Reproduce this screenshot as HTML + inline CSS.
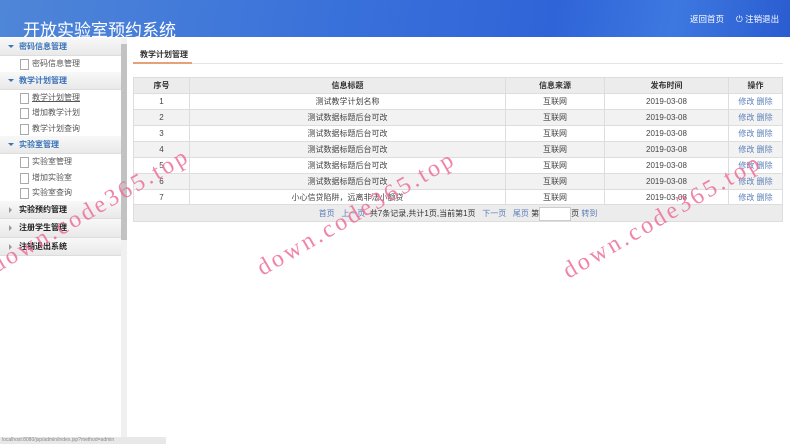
<!DOCTYPE html>
<html><head><meta charset="utf-8"><style>
*{margin:0;padding:0;box-sizing:border-box}
body{width:790px;height:444px;overflow:hidden;background:#fff;font-family:"Liberation Sans","Noto Sans CJK SC",sans-serif;font-size:8px;color:#333;position:relative}
.hd{position:absolute;left:0;top:0;width:790px;height:37px;background:linear-gradient(100deg,#4f86d8 0%,#3a72da 40%,#2f64d8 70%,#3d78e0 85%,#2a5cd0 100%)}
.hd .t{position:absolute;left:23px;top:16px;font-size:17px;color:#fff}
.hd .r{position:absolute;top:13px;color:#fff;font-size:8.5px}
.sb{position:absolute;left:0;top:38px;width:121px;height:400px;background:#fff}
.gh{height:18px;line-height:17px;background:linear-gradient(#f8f8f8,#e9e9e9);border-bottom:1px solid #ddd;color:#3b73b9;font-size:8px;padding-left:19px;position:relative;font-weight:bold}
.gh:before{content:"";position:absolute;left:8px;top:7px;border:3px solid transparent;border-top:3px solid #3b73b9}
.gh.c{color:#222;height:18.5px;line-height:18.5px}
.gh.c:before{border:3px solid transparent;border-left:3px solid #999;left:9px;top:6px}
.it{height:15.5px;line-height:15.5px;padding-left:32px;color:#555;font-size:8px;position:relative}
.it:before{content:"";position:absolute;left:20px;top:3px;width:7px;height:9px;border:1px solid #aaa;background:#fff}
.sc{position:absolute;left:121px;top:38px;width:6px;height:400px;background:#f0f0f0}
.sc i{position:absolute;left:0;top:6px;width:6px;height:196px;background:#c2c2c2}
.tab{position:absolute;left:140px;top:49px;font-size:8px;font-weight:bold;color:#333}
.tl{position:absolute;left:133px;top:63px;width:650px;height:1px;background:#e4e4e4}
.to{position:absolute;left:133px;top:62px;width:59px;height:2px;background:#e8a07a}
table{position:absolute;left:133px;top:77px;width:650px;border-collapse:collapse;font-size:8px}
td,th{border:1px solid #ddd;height:16px;text-align:center;color:#444;font-weight:normal}
th{background:#ececec;font-weight:bold;color:#333}
tr:nth-child(odd) td{background:#f2f2f2}
a{color:#5a7fb8;text-decoration:none}
.pg{position:absolute;left:133px;top:204px;width:650px;height:18px;background:#ececec;border:1px solid #ddd;text-align:center;line-height:17px;font-size:8px}
.pg input{width:32px;height:14px;border:1px solid #ccc;vertical-align:middle;background:#fff}
.wm{position:absolute;color:#ee6f98;font-family:"Liberation Serif",serif;font-size:24px;transform-origin:left bottom;transform:rotate(-30deg);white-space:nowrap;letter-spacing:3px;opacity:.85}
.st{position:absolute;left:0;top:437px;width:166px;height:7px;background:#e8e8e8;font-size:5px;color:#888;line-height:7px;padding-left:2px}
</style></head><body>
<div class="hd"><div class="t">开放实验室预约系统</div><div class="r" style="left:690px">返回首页</div><div class="r" style="left:736px">⏻ 注销退出</div></div>
<div class="sb">
<div class="gh">密码信息管理</div>
<div class="it">密码信息管理</div>
<div class="gh">教学计划管理</div>
<div class="it" style="text-decoration:underline">教学计划管理</div>
<div class="it">增加教学计划</div>
<div class="it">教学计划查询</div>
<div class="gh">实验室管理</div>
<div class="it">实验室管理</div>
<div class="it">增加实验室</div>
<div class="it">实验室查询</div>
<div class="gh c">实验预约管理</div>
<div class="gh c">注册学生管理</div>
<div class="gh c">注销退出系统</div>
</div>
<div class="sc"><i></i></div>
<div class="tab">教学计划管理</div><div class="tl"></div><div class="to"></div>
<table>
<tr><th style="width:56px">序号</th><th style="width:316px">信息标题</th><th style="width:99px">信息来源</th><th style="width:124px">发布时间</th><th>操作</th></tr>
<tr><td>1</td><td>测试教学计划名称</td><td>互联网</td><td>2019-03-08</td><td><a>修改</a> <a>删除</a></td></tr>
<tr><td>2</td><td>测试数据标题后台可改</td><td>互联网</td><td>2019-03-08</td><td><a>修改</a> <a>删除</a></td></tr>
<tr><td>3</td><td>测试数据标题后台可改</td><td>互联网</td><td>2019-03-08</td><td><a>修改</a> <a>删除</a></td></tr>
<tr><td>4</td><td>测试数据标题后台可改</td><td>互联网</td><td>2019-03-08</td><td><a>修改</a> <a>删除</a></td></tr>
<tr><td>5</td><td>测试数据标题后台可改</td><td>互联网</td><td>2019-03-08</td><td><a>修改</a> <a>删除</a></td></tr>
<tr><td>6</td><td>测试数据标题后台可改</td><td>互联网</td><td>2019-03-08</td><td><a>修改</a> <a>删除</a></td></tr>
<tr><td>7</td><td>小心信贷陷阱，远离非法小额贷</td><td>互联网</td><td>2019-03-08</td><td><a>修改</a> <a>删除</a></td></tr>
</table>
<div class="pg"><a>首页</a> &nbsp; <a>上一页</a> &nbsp;共7条记录,共计1页,当前第1页 &nbsp; <a>下一页</a> &nbsp; <a>尾页</a> 第<input>页 <a>转到</a></div>
<div class="wm" style="left:0px;top:252px">down.code365.top</div>
<div class="wm" style="left:266px;top:255px">down.code365.top</div>
<div class="wm" style="left:572px;top:258px">down.code365.top</div>
<div class="st">localhost:8080/jsp/admin/index.jsp?method=admin</div>
</body></html>
